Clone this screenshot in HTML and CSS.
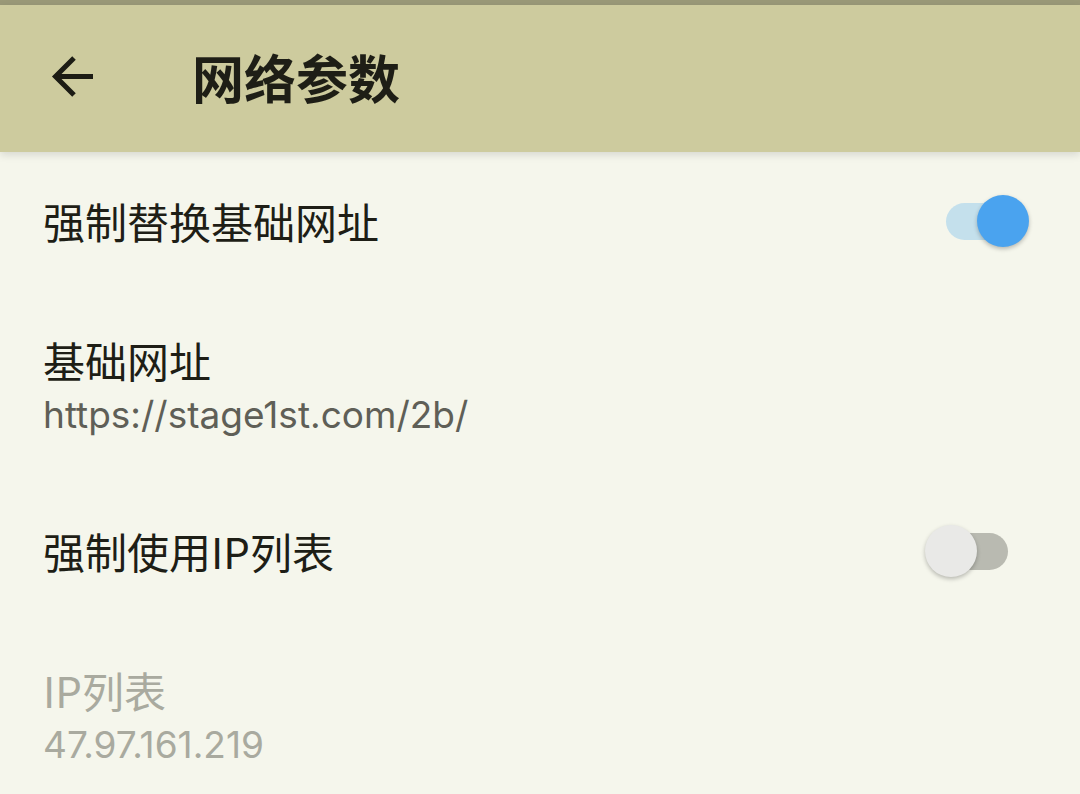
FILE: index.html
```html
<!DOCTYPE html>
<html lang="zh-CN">
  <head>
    <title>网络参数</title>
    <link rel="stylesheet" href="styles.css">
  </head>
  <body>
    <div class="status-strip"></div>
    <header class="app-bar">
      <button class="back-btn" aria-label="返回">
        <svg width="44" height="44" viewBox="0 0 44 44">
          <path d="M42 21.5H5M23 3L4.5 21.5L23 40" fill="none" stroke="#1c1c14" stroke-width="5"/>
        </svg>
      </button>
      <h1 class="title">网络参数</h1>
    </header>

    <main class="pref-list">
      <div class="pref-row">
        <div class="pref-text">
          <div class="pref-title">强制替换基础网址</div>
        </div>
        <div class="switch on">
          <div class="track"></div>
          <div class="thumb"></div>
        </div>
      </div>

      <div class="pref-row two-line">
        <div class="pref-text">
          <div class="pref-title">基础网址</div>
          <div class="pref-summary">https://stage1st.com/2b/</div>
        </div>
      </div>

      <div class="pref-row">
        <div class="pref-text">
          <div class="pref-title">强制使用IP列表</div>
        </div>
        <div class="switch">
          <div class="track"></div>
          <div class="thumb"></div>
        </div>
      </div>

      <div class="pref-row two-line disabled">
        <div class="pref-text">
          <div class="pref-title">IP列表</div>
          <div class="pref-summary">47.97.161.219</div>
        </div>
      </div>
    </main>
  </body>
</html>
```

FILE: styles.css
```css
body {
  margin: 0;
  background-color: #f5f6ec;
  font-family: "Noto Sans CJK SC", "Noto Sans", sans-serif;
  color: #1e1e16;
  overflow: hidden;
}
.status-strip {
  height: 5px;
  background-color: #9a9978;
}
.app-bar {
  height: 147px;
  background-color: #cdcb9e;
  display: flex;
  align-items: center;
  box-shadow: 0 3px 8px rgba(0, 0, 0, 0.12);
  position: relative;
}
.back-btn {
  border: none;
  background: none;
  padding: 0;
  margin-left: 51px;
  margin-top: -4px;
  width: 44px;
  height: 44px;
  display: flex;
}
.title {
  margin: 0 0 0 97px;
  font-size: 52px;
  font-weight: 700;
  line-height: 1;
  margin-top: -4px;
}
.pref-row {
  display: flex;
  align-items: center;
  padding: 44px 51px 45px 43px;
}
.pref-row.two-line {
  padding-bottom: 42px;
}
.pref-text {
  flex: 1;
}
.pref-title {
  font-size: 42px;
  line-height: 50px;
}
.pref-summary {
  margin-top: 5px;
  font-family: Inter, "Noto Sans CJK SC", sans-serif;
  font-size: 37px;
  line-height: 50px;
  color: #5f5f57;
}
.disabled .pref-title,
.disabled .pref-summary {
  color: #a9aa9f;
}
.switch {
  position: relative;
  width: 104px;
  height: 52px;
  margin: -1px 0;
}
.track {
  position: absolute;
  top: 8px;
  left: 9px;
  width: 74px;
  height: 37px;
  border-radius: 19px;
  background-color: #b9bab1;
}
.thumb {
  position: absolute;
  top: 0;
  left: 0;
  width: 52px;
  height: 52px;
  border-radius: 50%;
  background-color: #e9e9e7;
  box-shadow: 0 2px 4px rgba(0, 0, 0, 0.25);
}
.switch.on .track {
  left: 21px;
  background-color: #c4e0ec;
}
.switch.on .thumb {
  left: 52px;
  background-color: #4aa3ef;
}
```
